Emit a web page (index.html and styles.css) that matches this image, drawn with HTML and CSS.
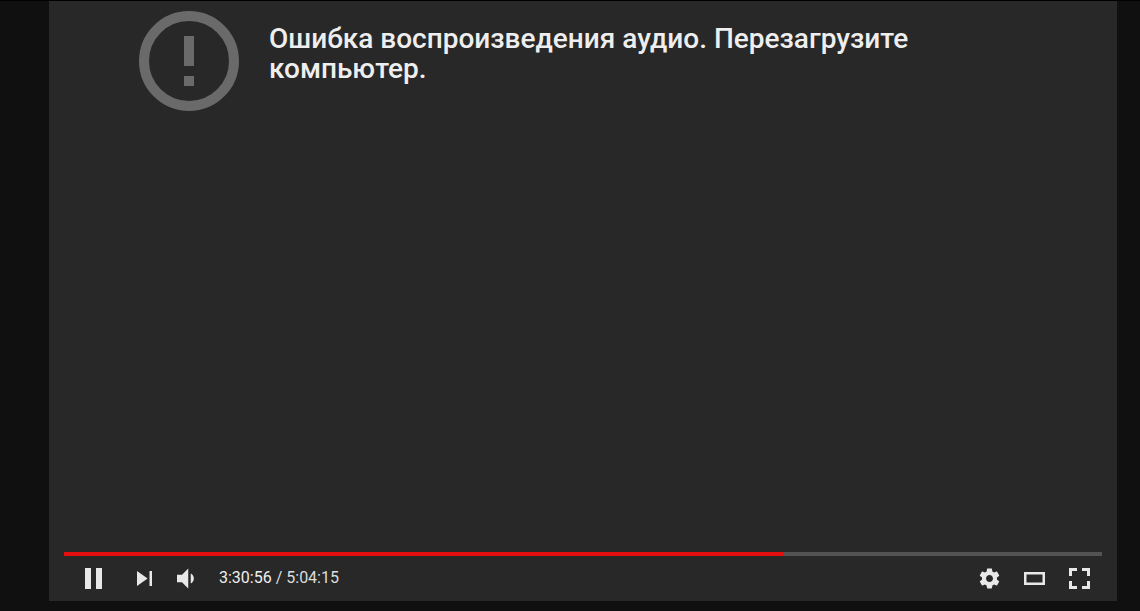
FILE: index.html
```html
<!DOCTYPE html>
<html lang="ru">
<head>
<meta charset="utf-8">
<meta name="viewport" content="width=device-width, initial-scale=1">
<title>Видео</title>
<link rel="stylesheet" href="styles.css">
</head>
<body>
<main class="player">
  <section class="error" role="alert">
    <svg class="error-icon" viewBox="0 0 100 100" aria-hidden="true">
      <circle cx="50" cy="50" r="45" fill="none" stroke="currentColor" stroke-width="10"/>
      <path fill="currentColor" d="M45 25h10v30H45zM45 65h10v10H45z"/>
    </svg>
    <h1 class="error-text">Ошибка воспроизведения аудио. Перезагрузите компьютер.</h1>
  </section>
  <footer class="chrome">
    <div class="progress" role="progressbar" aria-label="Ход воспроизведения" aria-valuemin="0" aria-valuemax="18255" aria-valuenow="12656">
      <div class="progress-played" style="width: 69.33%"></div>
    </div>
    <div class="controls">
      <button class="control" type="button" aria-label="Пауза">
        <svg viewBox="0 0 45 45" aria-hidden="true"><path d="M15 12h6v21h-6zM26 12h6v21h-6z"/></svg>
      </button>
      <div class="group">
        <button class="control" type="button" aria-label="Следующее видео">
          <svg viewBox="0 0 36 36" aria-hidden="true"><path d="M12 24l8.500-6L12 12v12zM22 12v12h2V12h-2z"/></svg>
        </button>
        <button class="control" type="button" aria-label="Громкость">
          <svg viewBox="0 0 36 36" aria-hidden="true"><path d="M8 21h4l5 5V10l-5 5H8v6zM19 14v8c1.48-.68 2.5-2.23 2.5-4 0-1.74-1.02-3.26-2.5-4z"/></svg>
        </button>
      </div>
      <div class="time"><span class="time-current">3:30:56</span> / 5:04:15</div>
      <div class="group group-end">
        <button class="control" type="button" aria-label="Настройки">
          <svg viewBox="0 0 36 36" aria-hidden="true"><path d="M23.94 18.78c.03-.25.05-.51.05-.78s-.02-.52-.05-.78l1.68-1.32c.15-.12.19-.33.09-.51l-1.6-2.76c-.09-.17-.31-.24-.48-.17l-1.99.8c-.41-.32-.86-.58-1.35-.78l-.3-2.12c-.02-.19-.19-.33-.39-.33h-3.2c-.2 0-.36.14-.39.33l-.3 2.12c-.48.2-.93.47-1.35.78l-1.99-.8c-.18-.07-.39 0-.48.17l-1.6 2.76c-.1.17-.05.39.09.51l1.68 1.32c-.03.25-.05.52-.05.78s.02.52.05.78l-1.68 1.32c-.15.12-.19.33-.09.51l1.6 2.76c.09.17.31.24.48.17l1.99-.8c.41.32.86.58 1.35.78l.3 2.12c.02.19.19.33.39.33h3.2c.2 0 .36-.14.39-.33l.3-2.12c.48-.2.93-.47 1.35-.78l1.99.8c.18.07.39 0 .48-.17l1.6-2.76c.09-.17.05-.39-.09-.51l-1.68-1.32zM18 20.8c-1.55 0-2.8-1.25-2.8-2.8s1.25-2.8 2.8-2.8 2.8 1.25 2.8 2.8-1.25 2.8-2.8 2.8z"/></svg>
        </button>
        <button class="control" type="button" aria-label="Широкий экран">
          <svg viewBox="0 0 45 45" aria-hidden="true"><path fill-rule="evenodd" d="M12 16h21v13H12zM14.500 18.500v8h16v-8z"/></svg>
        </button>
        <button class="control" type="button" aria-label="Во весь экран">
          <svg viewBox="0 0 45 45" aria-hidden="true"><path d="M12 12h8v3h-5v5h-3zM25 12h8v8h-3v-5h-5zM12 25h3v5h5v3h-8zM30 25h3v8h-8v-3h5z"/></svg>
        </button>
      </div>
    </div>
  </footer>
</main>
</body>
</html>
```
FILE: styles.css
```css
* {
  box-sizing: border-box;
}

body {
  display: flex;
  min-height: 100vh;
  margin: 0;
  padding: 0 23px 10px 49px;
  border-top: 1px solid #000;
  background: #101010;
  color: #eee;
  font-family: Roboto, "Liberation Sans", sans-serif;
}

.player {
  display: flex;
  flex: 1;
  flex-direction: column;
  justify-content: space-between;
  background: #282828;
}

.error {
  display: flex;
  gap: 30px;
  padding: 10px 90px 0;
}

.error-icon {
  flex: none;
  width: 100px;
  height: 100px;
  color: #6a6a6a;
}

.error-text {
  max-width: 660px;
  margin: 13px 0 0;
  font-size: 28px;
  font-weight: 500;
  line-height: 30px;
}

.chrome {
  padding: 0 15px;
}

.progress {
  height: 4px;
  background: #535353;
}

.progress-played {
  height: 100%;
  background: #e50e0e;
}

.controls {
  display: flex;
  gap: 7px;
  align-items: center;
  padding-left: 6px;
}

.group {
  display: flex;
}

.group-end {
  margin-left: auto;
}

.control {
  width: 45px;
  height: 45px;
  padding: 0;
  border: 0;
  background: none;
  color: #e8e8e8;
  cursor: pointer;
}

.control svg {
  display: block;
  width: 100%;
  height: 100%;
  fill: currentColor;
}

.time {
  padding-bottom: 2px;
  color: #ddd;
  font-size: 16px;
  line-height: 40px;
  white-space: nowrap;
}

.time-current {
  color: #eee;
}
```
